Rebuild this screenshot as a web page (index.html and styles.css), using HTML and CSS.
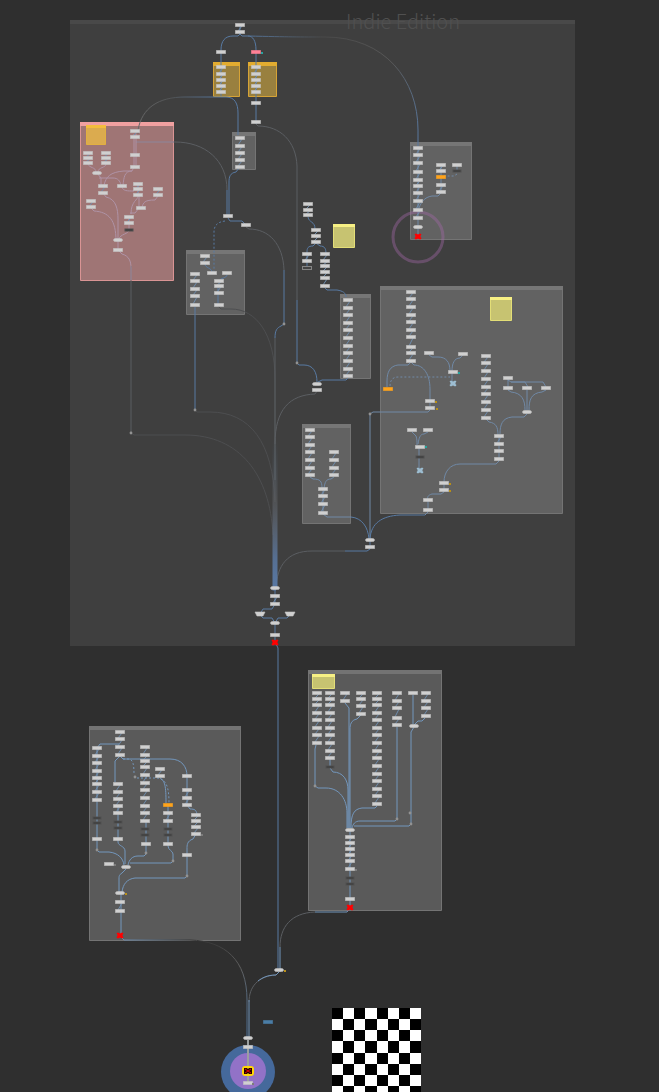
FILE: index.html
```html
<!DOCTYPE html>
<html lang="en">
<head>
<meta charset="utf-8">
<title>Node graph</title>
<link rel="stylesheet" href="styles.css">
</head>
<body>
<main class="workspace">
<svg class="graph" role="img" aria-label="Node graph">
  <defs>
    <linearGradient id="bundle" gradientUnits="userSpaceOnUse" x1="0" y1="440" x2="0" y2="588">
      <stop offset="0" stop-color="#55708f" stop-opacity="0"/>
      <stop offset=".4" stop-color="#686b70" stop-opacity=".4"/>
      <stop offset=".8" stop-color="#566f92"/>
      <stop offset="1" stop-color="#5878a4"/>
    </linearGradient>
    <linearGradient id="fadeRight" gradientUnits="userSpaceOnUse" x1="240" y1="36" x2="418" y2="140">
      <stop offset="0" stop-color="#5577a0"/><stop offset=".35" stop-color="#494949"/>
      <stop offset=".7" stop-color="#585858"/><stop offset="1" stop-color="#5878a0"/>
    </linearGradient>
    <linearGradient id="fadeLeft" gradientUnits="userSpaceOnUse" x1="221" y1="0" x2="138" y2="0">
      <stop offset="0" stop-color="#5577a0"/><stop offset=".6" stop-color="#505254"/><stop offset="1" stop-color="#686868"/>
    </linearGradient>
    <linearGradient id="fadeBase" gradientUnits="userSpaceOnUse" x1="121" y1="940" x2="247" y2="1037">
      <stop offset="0" stop-color="#6c8eb2"/><stop offset=".35" stop-color="#343434"/>
      <stop offset=".5" stop-color="#3e3e3e"/>
      <stop offset=".7" stop-color="#606060"/><stop offset="1" stop-color="#4c7098"/>
    </linearGradient>
  </defs>

  <rect class="backdrop-main" x="70" y="20" width="505" height="626"/>
  <rect class="backdrop-main-bar" x="70" y="20" width="505" height="4"/>
  <text class="edition" x="346" y="29">Indie Edition</text>
  <g id="boxes"></g>

  <g class="links">
    <path d="M240 25V34l-2 2h-5c-8 0-12 5-12 14V96M240 34l2 2h6c5 0 8 5 8 14V124"/>
    <path stroke="url(#fadeRight)" d="M248 36C290 37 300 37 325 37C385 37 418 80 418 130V148"/>
    <path stroke="url(#fadeLeft)" d="M221 97H185C158 97 142 108 138 130V134"/>
    <path d="M221 97H226C235 97 238 104 238 113V135"/>
    <path d="M239 168l-3 4c-6 1-7 5-7 10V215"/>
    <path class="dim" d="M136 142H175C205 142 227 160 227 190"/>
    <path d="M227 190V215M228 218l2 3h12l3 3M284 270V324l-3 2c-4 2-6 4-6 12"/>
    <path class="dim" d="M246 227l3 2c20 0 34 15 35 41M131 266V433"/>
    <path class="faint" d="M195 410l2 2h13c40 0 63 30 65 90M218 306l3 3h10c25 0 44 25 44 70V500M131 433l3 2H185c55 0 85 40 88 100"/>
    <path class="dim" d="M275 338V480"/>
    <path class="dash" d="M225 221c-8 1-11 5-11 11V272"/>
    <path d="M195 307V410M205 264c0 4 7 4 7 8M227 275c0 3-7 3-8 6M218 286V305"/>
    <path class="dim" d="M256 124l2 2c22 0 38 15 39 40V300"/>
    <path d="M297 300V363l2 2h5c9 0 13 7 13 17M348 378l-2 2H322l-4 2"/>
    <path class="dim" d="M317 391l-2 3c-25 1-40 15-40 50"/>
    <path d="M308 217c1 6 7 4 7 12M316 243l-3 3c-5 0-6 2-6 6V268M316 243l4 3c5 0 6 3 6 8M325 288l2 2h10c6 1 9 3 9 7"/>
  </g>
  <g class="links mid">
    <path d="M441 193l-3 3h-6c-6 1-10 4-13 12M418 148V236M441 165V192M457 165V171"/>
    <path class="dash" d="M457 174l-3 2h-10"/>
    <path d="M411 362l-3 3h-10c-8 1-11 7-11 16V387M411 362l3 3c10 0 16 10 16 24V408"/>
    <path class="dash" d="M390 386c0-6 3-9 8-9H450"/>
    <path d="M429 355l3 2h6c8 0 12 5 12 14M463 355l-3 3c-6 0-8 6-8 13V382M430 410l-2 2H373l-3 2V538"/>
    <path d="M412 432l4 4c1 3 1 5 1 9M428 432l-4 2c-4 0-5 4-6 10M419 447V468"/>
    <path d="M486 419l3 3c7 1 9 5 9 13M527 414l-3 3h-12c-10 1-12 8-12 17M508 378V388M508 380l3 2h14l3 5M511 382h32l3 5M508 390l3 2c11 1 14 8 14 18M527 390V410M546 390l-4 2c-11 1-13 8-13 18"/>
    <path d="M499 436V461l-3 3H460c-10 0-16 8-16 18V492l-3 2h-9c-4 1-5 3-4 6V512l-3 3"/>
    <path d="M310 477l3 2c7 0 9 2 9 9M334 477l-3 2c-5 0-6 3-7 9M323 489V514l4 3h24"/>
  </g>
  <g class="links">
    <path d="M425 515H400c-18 1-29 8-30 24V549l-3 2H345M351 517c11 1 17 10 18 22"/>
    <path class="dim" d="M345 551H312c-25 0-35 15-36 37"/>
    <path class="bundle" d="M275 440l0 148h1"/>
    <path d="M275 589V604l-3 5h-9l-3 5M260 615l3 3h9l3 5M290 615l-3 3h-9l-3 5V642l3 6V968"/>
  </g>

  <g class="links low">
    <path d="M316 745l-1 4V786l3 2h8c14 0 21 12 21 25V828M330 758V768l3 4c10 0 15 8 15 18V828M345 703l4 5V828M361 715l-4 4c-6 1-7 6-7 10V828"/>
    <path d="M377 806l-2 2h-13c-8 1-11 6-11 20M397 727V819l-2 2H360c-5 0-7 3-8 7M413 695V724M425 718l-3 3h-4l-4 4M414 727l-3 5V824l-2 2H354M350 830V907"/>
    <path d="M350 908l-3 4h-32"/>
    <path class="dim" d="M315 912c-24 1-35 15-35 35"/>
    <path d="M280 947V972"/>

    <path d="M119 744H100l-3 4V850l2 2h10c9 1 14 6 15 13M120 756l-5 5V782M120 756l3 3H170c12 0 17 8 17 17V805l3 4c5 0 6 1 7 5M118 806V842c0 4 7 4 7 9V864"/>
    <path class="dash" d="M123 759h5c5 0 6 5 6 16M137 778H158c8 2 11 8 11 25"/>
    <path d="M160 778c5 3 6 8 6 25M168 805V846c0 4 5 5 5 8V861l-2 2H130M146 820V854l-2 2h-6c-6 0-9 4-10 9M196 834l-3 5c-6 2-6 6-6 10V876l-2 2H135c-8 1-12 6-13 14M126 869l-4 4c-3 2-3 3-3 6V892M121 893V935"/>
    <path stroke="url(#fadeBase)" d="M121 937l3 3H190C225 941 247 960 247 1000V1037"/>
    <path class="dim" d="M279 972l-3 3c-18 1-27 12-27 27"/>
    <path d="M279 972l-3 3c-9 0-14 3-18 6M249 1000V1037"/>
  </g>
  <g class="links rose">
    <path d="M134 134V167l-2 4h-8c-14 1-18 6-20 14M136 134V165M136 142H174M132 171c-8 0-8 7-9 14M88 164c1 4 8 3 8 8M106 164c0 4-8 3-8 8M97 173l4 5V185M99 178h14c5 0 7 3 8 7M122 187c1 4 5 4 12 4M103 193l3 4c10 2 12 12 12 22V240M91 208l3 3c15 1 22 9 22 30M138 184V196c0 4-7 5-7 18M139 196V208l-4 5h-5M158 196l-3 4c-10 0-12 2-13 8M129 217V230c0 4-9 4-10 9M118 241V250l4 4c7 2 9 7 9 14V280"/>
  </g>
  <circle class="ring" cx="418" cy="237" r="25"/>
  <circle class="output-ring" cx="248" cy="1072" r="27"/>
  <circle class="output-core" cx="248" cy="1071" r="18"/>
  <path class="output-wire" d="M248 1040V1084"/>
  <g id="nodes"></g>
  <rect class="output-flag" x="242" y="1066" width="12" height="10" rx="3"/>
  <path class="output-mark" d="M244 1068h3l1 1 1-1h3v6h-3l-1-1-1 1h-3z"/>
  <path class="output-cross" d="M245 1069l3 2 3-2M245 1073l3-2 3 2"/>

  <svg x="332" y="1008" width="89" height="89" viewBox="0 0 8 8" shape-rendering="crispEdges">
    <rect width="8" height="8" fill="#fff"/>
    <path d="M0 0h1v1h1v1h-1v1h1v1h-1v1h1v1h-1v1h1v1h-1v-1h-1v-1h1v-1h-1v-1h1v-1h-1v-1h1v-1h-1zM2 0h1v1h1v1h-1v1h1v1h-1v1h1v1h-1v1h1v1h-1v-1h-1v-1h1v-1h-1v-1h1v-1h-1v-1h1v-1h-1zM4 0h1v1h1v1h-1v1h1v1h-1v1h1v1h-1v1h1v1h-1v-1h-1v-1h1v-1h-1v-1h1v-1h-1v-1h1v-1h-1zM6 0h1v1h1v1h-1v1h1v1h-1v1h1v1h-1v1h1v1h-1v-1h-1v-1h1v-1h-1v-1h1v-1h-1v-1h1v-1h-1z"/>
  </svg>
</svg>
</main>
<script src="graph.js"></script>
</body>
</html>
```

FILE: styles.css
```css
html, body { margin: 0; height: 100%; background: #2f2f2f; }
.workspace { height: 100vh; overflow: hidden; }
.graph { display: block; width: 100%; height: 100%; }
.edition { font: 300 20px "Noto Sans CJK SC", "Noto Sans", sans-serif; fill: #505050; }
.backdrop-main { fill: #3f3f3f; }
.backdrop-main-bar { fill: #494949; }

.box-gray { fill: #626262; stroke: #747474; }
.box-gray-bar { fill: #767676; }
.box-low { fill: #5a5a5a; stroke: #747474; }
.box-low-bar { fill: #737373; }
.box-rose { fill: #9f7575; stroke: #d99494; }
.box-rose-bar { fill: #f0a0a0; }
.box-gold { fill: #99803f; stroke: #d6a336; }
.box-gold-bar { fill: #e2ac30; }
.box-amber { fill: #dbab4f; stroke: #e2b040; }
.box-amber-bar { fill: #f4bd3c; }
.box-note { fill: #c7c371; stroke: #e3de77; }
.box-note-bar { fill: #f7f084; }

.links path { fill: none; stroke: #587aa3; stroke-width: 1; }
.mid path { stroke: #7089a6; }
.low path { stroke: #7397bd; }
.links path[stroke="url(#fadeRight)"] { stroke: url(#fadeRight); }
.links path[stroke="url(#fadeLeft)"] { stroke: url(#fadeLeft); }
.links path[stroke="url(#fadeBase)"] { stroke: url(#fadeBase); }
.links .dim { stroke: #5b5e62; }
.links .faint { stroke: #4d4e50; }
.links .dash { stroke-dasharray: 2 2; }
.links .bundle { stroke: url(#bundle); stroke-width: 5; }
.rose path { stroke: #af93a6; }
.step { stroke: #6f8dad; stroke-width: 1; }

.node { fill: #d0d0d0; stroke: #c4c4c4; stroke-opacity: .6; }
.pink { fill: #ff8095; stroke: #ff8095; }
.orange { fill: #ffa31a; stroke: #ffa31a; }
.steel { fill: #4a7da6; stroke: #4a7da6; }
.dark { fill: #383838; stroke: #505050; }
.hollow { fill: #444; stroke: #858585; stroke-opacity: 1; }
.red { fill: #f00; stroke: #f00; stroke-opacity: .5; }
.sky { fill: #9dbdd1; stroke: #9dbdd1; stroke-opacity: .4; }
.dot { fill: #929292; }
.flag-gold { fill: #b98f18; }
.flag-teal { fill: #25a5a0; }
.flag-gray { fill: #7c7c7c; }

.ring { fill: none; stroke: #a46aaa; stroke-opacity: .4; stroke-width: 3; }
.output-ring { fill: #45699b; }
.output-core { fill: #9272c7; }
.output-wire { stroke: #9a9fa0; stroke-width: 2; }
.output-flag { fill: #ffd60a; }
.output-mark { fill: #200; }
.output-cross { fill: none; stroke: #d00; stroke-width: 1; }
```

FILE: graph.js
```js
const SVG = "http://www.w3.org/2000/svg";
const boxLayer = document.getElementById("boxes");
const nodeLayer = document.getElementById("nodes");

function add(layer, tag, attrs) {
  const el = document.createElementNS(SVG, tag);
  for (const key in attrs) el.setAttribute(key, attrs[key]);
  layer.appendChild(el);
}

// kind, left, top, right, bottom
const boxes = [
  ["rose", 80, 122, 174, 281], ["amber", 86, 125, 106, 145],
  ["gold", 213, 62, 240, 97], ["gold", 248, 62, 277, 97],
  ["gray", 232, 132, 256, 170], ["gray", 186, 250, 245, 315],
  ["note", 333, 224, 355, 248], ["gray", 340, 294, 371, 379],
  ["gray", 410, 142, 472, 240], ["gray", 380, 286, 563, 514],
  ["note", 490, 297, 512, 321], ["gray", 302, 424, 351, 524],
  ["low", 308, 670, 442, 911], ["note", 312, 674, 335, 689],
  ["low", 89, 726, 241, 941]
];
for (const [kind, l, t, r, b] of boxes) {
  add(boxLayer, "path", { class: "box-" + kind, d: `M${l + .5} ${t + .5}H${r - .5}V${b - .5}H${l + .5}z` });
  add(boxLayer, "rect", { class: `box-${kind}-bar`, x: l, y: t, width: r - l, height: kind === "note" || kind === "amber" ? 3 : 4 });
}

// centre x followed by the centre y of each chained node
const chains = [
  [240, 25, 32], [221, 52], [221, 67, 74, 80, 86, 92], [256, 67, 74, 80, 86, 92],
  [256, 103], [256, 122], [240, 138, 146, 153, 160, 167],
  [135, 131, 137], [135, 155], [135, 167], [88, 153, 158, 163], [106, 153, 158, 163],
  [103, 186, 193], [122, 186], [138, 184, 189, 195], [158, 189, 195], [141, 208],
  [91, 201, 207], [129, 217, 223], [118, 250],
  [228, 216], [246, 225], [205, 256, 263], [212, 273], [227, 273],
  [195, 274, 281, 289, 296, 305], [219, 281, 286, 293], [219, 305],
  [308, 204, 210, 215], [316, 230, 236, 242], [307, 254, 261],
  [325, 254, 261, 266, 272, 278, 286],
  [348, 300, 308, 315, 323, 330, 338, 346, 353, 361, 369, 376], [317, 390],
  [418, 148, 155, 163, 172, 180, 186, 193, 201, 210, 218],
  [441, 165, 171], [441, 185, 192], [457, 165],
  [411, 292, 299, 307, 315, 322, 330, 337, 347, 353, 361],
  [429, 353], [463, 354], [453, 372], [430, 401], [430, 408],
  [486, 356, 363, 371, 379, 387, 394, 402, 410, 418],
  [508, 378], [508, 388], [527, 388], [546, 388], [412, 430], [428, 430], [420, 447],
  [499, 436, 444], [499, 451], [499, 459], [444, 483], [444, 490], [428, 500], [428, 510],
  [310, 430, 437, 445, 452, 460, 468, 475], [334, 452, 460, 468, 475],
  [323, 489, 496, 504, 513], [370, 547], [275, 596, 604], [275, 635],
  [317, 693, 699, 705, 713, 720, 728, 735, 743],
  [330, 693, 699, 705, 713, 720, 728, 735, 743, 751, 758],
  [345, 693, 701], [361, 693, 699, 706, 714],
  [377, 693, 699, 705, 713, 720, 728, 735, 743, 751, 758, 766, 774, 781, 789, 796, 804],
  [397, 693, 701, 708, 718, 725], [413, 693], [426, 693, 701, 708, 716],
  [350, 837, 843, 849, 855, 861, 869], [350, 899],
  [120, 732, 739, 747, 755], [97, 748, 756, 763, 771, 778, 784, 792, 800], [97, 839],
  [118, 784, 792, 799, 806, 813], [118, 839],
  [145, 747, 755, 761, 767, 775, 783, 790, 798, 806, 813, 821], [146, 844],
  [160, 769, 776], [168, 813, 821], [168, 844], [187, 776], [187, 790, 798, 805],
  [196, 815, 821, 827, 834], [187, 855], [109, 864], [120, 902, 911],
  [248, 1047], [248, 1083]
];
function node(x, y, kind = "", rx = 0) {
  add(nodeLayer, "rect", { class: "node " + kind, x: x - 4.5, y: y - 1.5, width: 9, height: 3, rx });
}
for (const [x, ...ys] of chains) {
  ys.forEach((y, i) => {
    if (i) add(nodeLayer, "path", { class: "step", d: `M${x + 2} ${ys[i - 1] + 1}L${x - 2} ${y - 1}` });
  });
  ys.forEach(y => node(x, y));
}

const merges = [[97, 173], [118, 240], [317, 384], [418, 227], [527, 412], [370, 540],
  [275, 588], [275, 623], [350, 830], [414, 726], [126, 867], [120, 893], [279, 970], [248, 1038]];
for (const [x, y] of merges) node(x, y, "", 2);

const tinted = [[256, 52, "pink"], [441, 177, "orange"], [388, 389, "orange"], [168, 805, "orange"],
  [268, 1022, "steel"], [307, 268, "hollow"]];
for (const [x, y, kind] of tinted) node(x, y, kind);

const dark = [[129, 230], [457, 171], [420, 457], [330, 767], [350, 878], [350, 884], [97, 818],
  [97, 823], [118, 822], [118, 828], [145, 829], [145, 835], [168, 829], [168, 835]];
for (const [x, y] of dark)
  add(nodeLayer, "rect", { class: "dark", x: x - 4, y: y - 1, width: 8, height: 2 });

for (const x of [260, 290])
  add(nodeLayer, "path", { class: "node", d: `M${x - 5} 612h10l-2 4h-6z` });

const crosses = [[418, 236, "red"], [275, 642, "red"], [350, 907, "red"], [120, 935, "red"],
  [453, 383, "sky"], [420, 470, "sky"]];
for (const [x, y, kind] of crosses)
  add(nodeLayer, "path", { class: kind, d: `M${x - 3} ${y - 2}h2l1 1 1-1h2v1l-1 1 1 2v1h-2l-1-1-1 1h-2v-1l1-2-1-1z` });

for (const [x, y] of [[284, 324], [195, 410], [131, 433], [297, 363], [370, 414], [315, 786],
  [397, 819], [410, 813], [411, 824], [97, 850], [146, 853], [173, 861], [187, 876], [135, 777]])
  add(nodeLayer, "circle", { class: "dot", cx: x, cy: y, r: 1.4 });

for (const [x, y, kind] of [[262, 53, "teal"], [459, 373, "teal"], [426, 447, "teal"], [436, 402, "gold"],
  [437, 409, "gold"], [450, 484, "gold"], [450, 491, "gold"], [126, 894, "gold"], [285, 971, "gold"],
  [115, 865, "gray"], [202, 835, "gray"], [253, 1084, "gray"], [356, 870, "gray"]])
  add(nodeLayer, "rect", { class: "flag-" + kind, x: x - 1, y: y - 1, width: 2, height: 2 });
```
